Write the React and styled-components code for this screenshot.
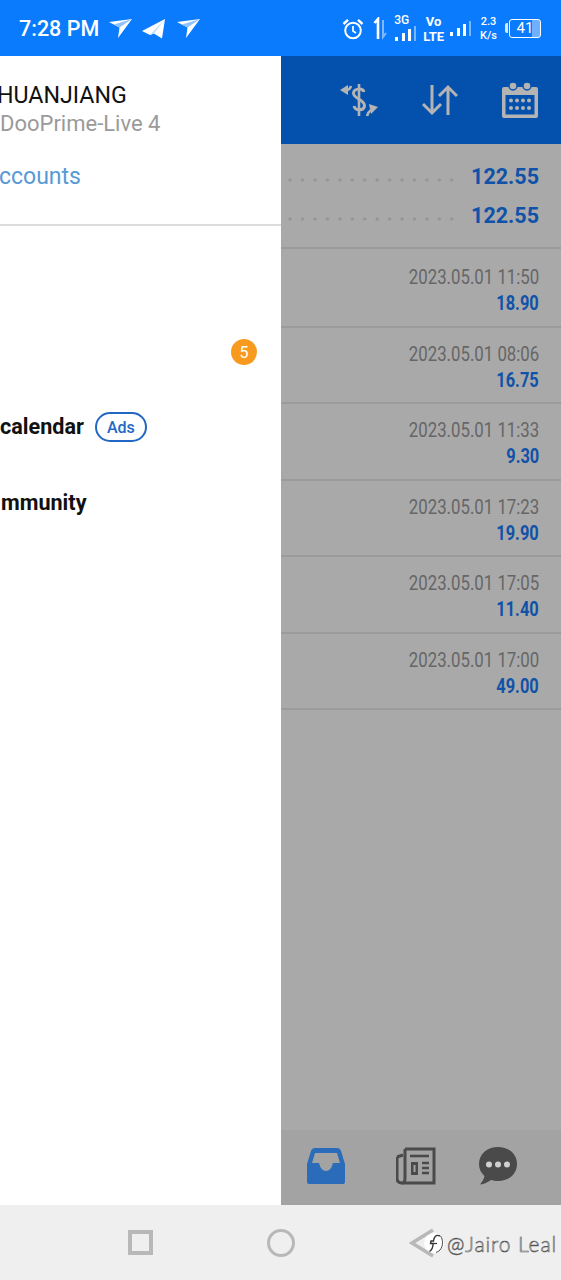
import React from 'react';
import styled, { createGlobalStyle } from 'styled-components';

const GlobalStyle = createGlobalStyle`
  html, body {
    margin: 0;
    padding: 0;
    background: #efefef;
    font-family: Roboto, "Liberation Sans", sans-serif;
  }
  * { box-sizing: border-box; }
`;

const Page = styled.div`
  width: 561px;
  height: 1280px;
  display: flex;
  flex-direction: column;
  overflow: hidden;
`;

const StatusBar = styled.div`
  height: 56px;
  flex: none;
  background: #0a7bfd;
  color: #fff;
  display: flex;
  align-items: center;
  justify-content: space-between;
  padding: 1px 20px 0 19px;
`;

const StatusGroup = styled.div`
  display: flex;
  align-items: center;
`;

const Spaced = styled.span`
  display: flex;
  margin-left: ${p => p.$left || 0}px;
`;

const Clock = styled.span`
  font-size: 21.5px;
  font-weight: 500;
  white-space: nowrap;
`;

const TinyStack = styled.span`
  display: flex;
  flex-direction: column;
  align-items: center;
  font-size: ${p => p.$size}px;
  line-height: ${p => p.$line}px;
  font-weight: ${p => p.$weight};
`;

const SignalWrap = styled.span`
  display: flex;
  flex-direction: column;
  align-items: flex-start;
  font-size: 12px;
  line-height: 12px;
  font-weight: 500;
  margin-top: -3px;
`;

const Battery = styled.span`
  width: 32px;
  height: 19px;
  border: 1.5px solid #fff;
  border-radius: 3px;
  font-size: 15px;
  line-height: 16px;
  text-align: center;
  background: linear-gradient(to right, transparent 72%, #6db0fd 72%);
  position: relative;
  &::before {
    content: '';
    position: absolute;
    left: -5px;
    top: 3px;
    width: 3px;
    height: 10px;
    background: #d5e7ff;
    border-radius: 2px 0 0 2px;
  }
`;

const Main = styled.div`
  flex: 1;
  min-height: 0;
  display: flex;
`;

const Drawer = styled.div`
  width: 281px;
  flex: none;
  background: #fff;
  overflow: hidden;
  display: flex;
  flex-direction: column;
`;

const Profile = styled.div`
  height: 170px;
  flex: none;
  border-bottom: 2px solid #dcdcdc;
  padding-top: 26px;
  white-space: nowrap;
`;

const Name = styled.div`
  font-size: 23.2px;
  line-height: 26px;
  color: #111;
  margin-left: -3px;
`;

const Server = styled.div`
  font-size: 22px;
  line-height: 26px;
  margin-top: 3px;
  color: #9a9a9a;
`;

const AccountsLink = styled.div`
  font-size: 23px;
  line-height: 28px;
  margin-top: 26px;
  margin-left: -1px;
  color: #589ad6;
`;

const Menu = styled.div`
  padding-top: 11px;
  display: flex;
  flex-direction: column;
`;

const MenuRow = styled.div`
  height: 76px;
  display: flex;
  align-items: center;
  justify-content: ${p => (p.$end ? 'flex-end' : 'flex-start')};
  padding-right: ${p => (p.$end ? 24 : 0)}px;
  gap: 11px;
`;

const MenuLabel = styled.span`
  font-size: 21.6px;
  font-weight: 700;
  color: #111;
  white-space: nowrap;
  margin-top: -1px;
  margin-left: ${p => p.$shift || 0}px;
`;

const CountBadge = styled.span`
  width: 26px;
  height: 26px;
  border-radius: 50%;
  background: #f79a1e;
  color: #fff;
  font-size: 16px;
  margin-top: 2px;
  display: flex;
  align-items: center;
  justify-content: center;
`;

const AdsPill = styled.span`
  width: 52px;
  height: 30px;
  border: 2px solid #2267c4;
  border-radius: 15px;
  color: #2267c4;
  font-size: 16px;
  font-weight: 500;
  display: flex;
  align-items: center;
  justify-content: center;
`;

const Content = styled.div`
  flex: 1;
  min-width: 0;
  background: #a9a9a9;
  display: flex;
  flex-direction: column;
`;

const Header = styled.div`
  height: 88px;
  flex: none;
  background: #0351ad;
  display: flex;
  align-items: center;
  padding: 0 23px 0 59px;
  justify-content: space-between;
`;

const Summary = styled.div`
  height: 105px;
  flex: none;
  padding: 13px 22px 0 7px;
  margin-bottom: 2px;
  border-bottom: 2px solid #9b9b9b;
`;

const SummaryRow = styled.div`
  height: 39px;
  display: flex;
  align-items: center;
  gap: 12px;
`;

const DotLeader = styled.div`
  flex: 1;
  height: 4px;
  margin-top: 7px;
  background-image: radial-gradient(circle at 2px 2px, #959595 1.4px, transparent 1.8px);
  background-size: 12.45px 4px;
  background-repeat: repeat-x;
`;

const SummaryValue = styled.span`
  font-size: 21.5px;
  font-weight: 700;
  color: #0f52a8;
`;

const Deal = styled.div`
  height: 76.5px;
  flex: none;
  border-bottom: 2px solid #9b9b9b;
  padding: 13px 22px 0 0;
  display: flex;
  flex-direction: column;
  align-items: flex-end;
`;

const DealDate = styled.div`
  font-size: 20px;
  line-height: 26px;
  color: #666;
  white-space: nowrap;
  transform: scaleX(0.84);
  transform-origin: right center;
`;

const DealValue = styled.div`
  font-size: 20px;
  line-height: 26px;
  font-weight: 700;
  color: #0f52a8;
  white-space: nowrap;
  transform: scaleX(0.82);
  transform-origin: right center;
`;

const Spacer = styled.div`
  flex: 1;
`;

const TabBar = styled.div`
  height: 75px;
  flex: none;
  background: #a3a3a3;
  display: flex;
  align-items: center;
  padding: 0 0 3px 26px;
`;

const NavBar = styled.div`
  height: 75px;
  flex: none;
  background: #efefef;
  display: flex;
  align-items: center;
  padding: 0 5px 0 128px;
  gap: 114px;
`;

const NavSquare = styled.span`
  width: 25px;
  height: 25px;
  border: 4px solid #b8b8b8;
  flex: none;
`;

const NavCircle = styled.span`
  width: 28px;
  height: 28px;
  border: 3.5px solid #b8b8b8;
  border-radius: 50%;
  flex: none;
`;

const BackArea = styled.div`
  position: relative;
  flex: 1;
  height: 30px;
  display: flex;
  align-items: center;
`;

const Watermark = styled.div`
  position: absolute;
  left: 14px;
  top: 3px;
  display: flex;
  align-items: center;
  gap: 2px;
  white-space: nowrap;
`;

const WatermarkText = styled.span`
  font-family: Lato, Roboto, sans-serif;
  font-size: 21px;
  font-weight: 300;
  letter-spacing: 0.9px;
  color: #fff;
  -webkit-text-stroke: 0.6px #555;
`;

const PlaneGlyph = () => (
  <svg width="24" height="20" viewBox="0 0 24 20">
    <path d="M0 3 L23 0 L9 19 L10.5 8.5 Z" fill="#fff" />
    <path d="M10.5 8.5 L23 0 L5 5.5 Z" fill="#8fc2fe" />
  </svg>
);

const TelegramGlyph = () => (
  <svg width="24" height="20" viewBox="0 0 24 20">
    <path d="M0 12 L23 0 L20 19.5 L12 14.5 L8 16 Z" fill="#fff" />
    <path d="M12 14.5 L23 0 L8 16 Z" fill="#bcdbff" />
  </svg>
);

const AlarmGlyph = () => (
  <svg width="22" height="22" viewBox="0 0 22 22" fill="none" stroke="#fff">
    <circle cx="11" cy="12.5" r="7.8" strokeWidth="2" />
    <path d="M11 8v5l3 2" strokeWidth="1.7" />
    <path d="M1.5 6 L6 1.8 M20.5 6 L16 1.8" strokeWidth="2.4" />
  </svg>
);

const DataArrows = () => (
  <svg width="14" height="24" viewBox="0 0 14 24" fill="none">
    <path d="M1.5 6 L5 2 V22" stroke="#fff" strokeWidth="2.6" />
    <path d="M10 3 V20 L13 16" stroke="#7fb8fe" strokeWidth="2" />
  </svg>
);

const Bars = () => (
  <svg width="22" height="15" viewBox="0 0 22 15" fill="#fff">
    <rect x="1" y="11" width="3" height="4" />
    <rect x="8" y="7" width="3" height="8" />
    <rect x="14" y="3" width="3" height="12" />
    <rect x="20" y="0" width="2" height="15" opacity="0.45" />
  </svg>
);

const DollarSwap = () => (
  <svg width="38" height="34" viewBox="0 0 38 34" fill="none" stroke="#b4b4b4">
    <path d="M24 9 C23 5 14 5 13.5 10 C13 16 25 16 24.5 23 C24 28 15 28 14 23" strokeWidth="3" />
    <path d="M19 1 V33" strokeWidth="2.6" />
    <path d="M0 7 L8 2 L8 12 Z" fill="#b4b4b4" stroke="none" />
    <path d="M7 7 Q10 6.5 11 3" strokeWidth="2.6" />
    <path d="M38 24 L29 21 L31 31 Z" fill="#b4b4b4" stroke="none" />
    <path d="M31 27 Q28 29 27 33" strokeWidth="2.6" />
  </svg>
);

const SwapArrows = () => (
  <svg width="36" height="32" viewBox="0 0 36 32" fill="none" stroke="#b4b4b4" strokeWidth="3">
    <path d="M10 1 V29 M1 20 L10 29 L19 20" />
    <path d="M26 31 V3 M17 12 L26 3 L35 12" />
  </svg>
);

const CalendarGlyph = () => (
  <svg width="36" height="36" viewBox="0 0 36 36">
    <path d="M2 5 H34 Q36 5 36 7 V34 Q36 36 34 36 H2 Q0 36 0 34 V7 Q0 5 2 5 Z M3.5 13 V32.5 H32.5 V13 Z" fill="#b4b4b4" fillRule="evenodd" />
    <circle cx="11" cy="4" r="4" fill="#b4b4b4" stroke="#0351ad" strokeWidth="1.4" />
    <circle cx="25" cy="4" r="4" fill="#b4b4b4" stroke="#0351ad" strokeWidth="1.4" />
    {[8.5, 14.5, 20.5, 26.5].map(x => [18.5, 26].map(y => (
      <circle key={`${x}-${y}`} cx={x + 0.5} cy={y} r="2" fill="#b4b4b4" />
    )))}
  </svg>
);

const InboxGlyph = () => (
  <svg width="38" height="36" viewBox="0 0 38 36">
    <path d="M8 0 H30 Q33 0 34 3 L38 16 V34 Q38 36 36 36 H2 Q0 36 0 34 V16 L4 3 Q5 0 8 0 Z M8 5 L5 15 H12 Q14 23 19 23 Q24 23 26 15 H33 L30 5 Z" fill="#2b6cba" fillRule="evenodd" />
  </svg>
);

const NewsGlyph = () => (
  <svg width="40" height="38" viewBox="0 0 40 38" fill="none" stroke="#4a4a4a">
    <path d="M9 2 H38 V36 H6 Q1 36 1 31 V10" strokeWidth="3" />
    <path d="M9 2 V31 Q9 36 6 36" strokeWidth="3" />
    <path d="M1 10 L7 8" strokeWidth="3" />
    <path d="M14 9 H33" strokeWidth="2.6" />
    <rect x="15" y="15" width="7" height="13" fill="#4a4a4a" stroke="none" />
    <rect x="17.5" y="18" width="2" height="7" fill="#a3a3a3" stroke="none" />
    <path d="M26 16 H33 M26 21 H33 M26 26 H33" strokeWidth="2.4" />
  </svg>
);

const ChatGlyph = () => (
  <svg width="38" height="38" viewBox="0 0 38 38">
    <path d="M19 0 C30 0 38 7 38 17 C38 27 30 34 19 34 C16 34 14 33.5 12 33 C9 35 5 37.5 1 37.5 C3 35 5 32 5.5 29 C2 26 0 22 0 17 C0 7 8 0 19 0 Z" fill="#4a4a4a" />
    <circle cx="10" cy="17.5" r="3" fill="#d0d0d0" />
    <circle cx="19" cy="17.5" r="3" fill="#d0d0d0" />
    <circle cx="28" cy="17.5" r="3" fill="#d0d0d0" />
  </svg>
);

const BackGlyph = () => (
  <svg width="26" height="30" viewBox="0 0 26 30" fill="none" stroke="#b8b8b8" strokeWidth="3.5">
    <path d="M24 2 L3 15 L24 28" />
  </svg>
);

const FacebookMark = () => (
  <svg width="22" height="24" viewBox="0 0 22 24">
    <circle cx="11" cy="12" r="10" fill="#fff" />
    <path d="M17 5 C13 3 11 6 10.5 10 L8 10 L7.5 12.5 L10.2 12.5 C10 16 9 19 6.5 20.5" fill="none" stroke="#333" strokeWidth="1.4" />
    <path d="M10.2 12.5 L14 12.5" stroke="#333" strokeWidth="1.2" />
    <path d="M17.5 5 C20 8 20.5 15 17 19 C15.5 20.5 14 21 13 21.5" fill="none" stroke="#444" strokeWidth="1" />
  </svg>
);

const deals = [
  ['2023.05.01 11:50', '18.90'],
  ['2023.05.01 08:06', '16.75'],
  ['2023.05.01 11:33', '9.30'],
  ['2023.05.01 17:23', '19.90'],
  ['2023.05.01 17:05', '11.40'],
  ['2023.05.01 17:00', '49.00'],
];

export default function App() {
  return (
    <Page>
      <GlobalStyle />
      <StatusBar>
        <StatusGroup>
          <Clock>7:28 PM</Clock>
          <Spaced $left={10}><PlaneGlyph /></Spaced>
          <Spaced $left={9}><TelegramGlyph /></Spaced>
          <Spaced $left={11}><PlaneGlyph /></Spaced>
        </StatusGroup>
        <StatusGroup>
          <AlarmGlyph />
          <Spaced $left={9}><DataArrows /></Spaced>
          <Spaced $left={7}>
            <SignalWrap>3G<Bars /></SignalWrap>
          </Spaced>
          <Spaced $left={7}>
            <TinyStack $size={13} $line={15} $weight={700}><span>Vo</span><span>LTE</span></TinyStack>
          </Spaced>
          <Spaced $left={5}><Bars /></Spaced>
          <Spaced $left={9}>
            <TinyStack $size={11} $line={14} $weight={500}><span>2.3</span><span>K/s</span></TinyStack>
          </Spaced>
          <Spaced $left={12}><Battery>41</Battery></Spaced>
        </StatusGroup>
      </StatusBar>

      <Main>
        <Drawer>
          <Profile>
            <Name>HUANJIANG</Name>
            <Server>DooPrime-Live 4</Server>
            <AccountsLink>ccounts</AccountsLink>
          </Profile>
          <Menu>
            <MenuRow />
            <MenuRow $end><CountBadge>5</CountBadge></MenuRow>
            <MenuRow>
              <MenuLabel>calendar</MenuLabel>
              <AdsPill>Ads</AdsPill>
            </MenuRow>
            <MenuRow><MenuLabel $shift={1}>mmunity</MenuLabel></MenuRow>
          </Menu>
        </Drawer>

        <Content>
          <Header>
            <DollarSwap />
            <SwapArrows />
            <CalendarGlyph />
          </Header>
          <Summary>
            <SummaryRow><DotLeader /><SummaryValue>122.55</SummaryValue></SummaryRow>
            <SummaryRow><DotLeader /><SummaryValue>122.55</SummaryValue></SummaryRow>
          </Summary>
          {deals.map(([date, value]) => (
            <Deal key={date}>
              <DealDate>{date}</DealDate>
              <DealValue>{value}</DealValue>
            </Deal>
          ))}
          <Spacer />
          <TabBar>
            <InboxGlyph />
            <Spaced $left={51}><NewsGlyph /></Spaced>
            <Spaced $left={43}><ChatGlyph /></Spaced>
          </TabBar>
        </Content>
      </Main>

      <NavBar>
        <NavSquare />
        <NavCircle />
        <BackArea>
          <BackGlyph />
          <Watermark>
            <FacebookMark />
            <WatermarkText>@Jairo Leal</WatermarkText>
          </Watermark>
        </BackArea>
      </NavBar>
    </Page>
  );
}
